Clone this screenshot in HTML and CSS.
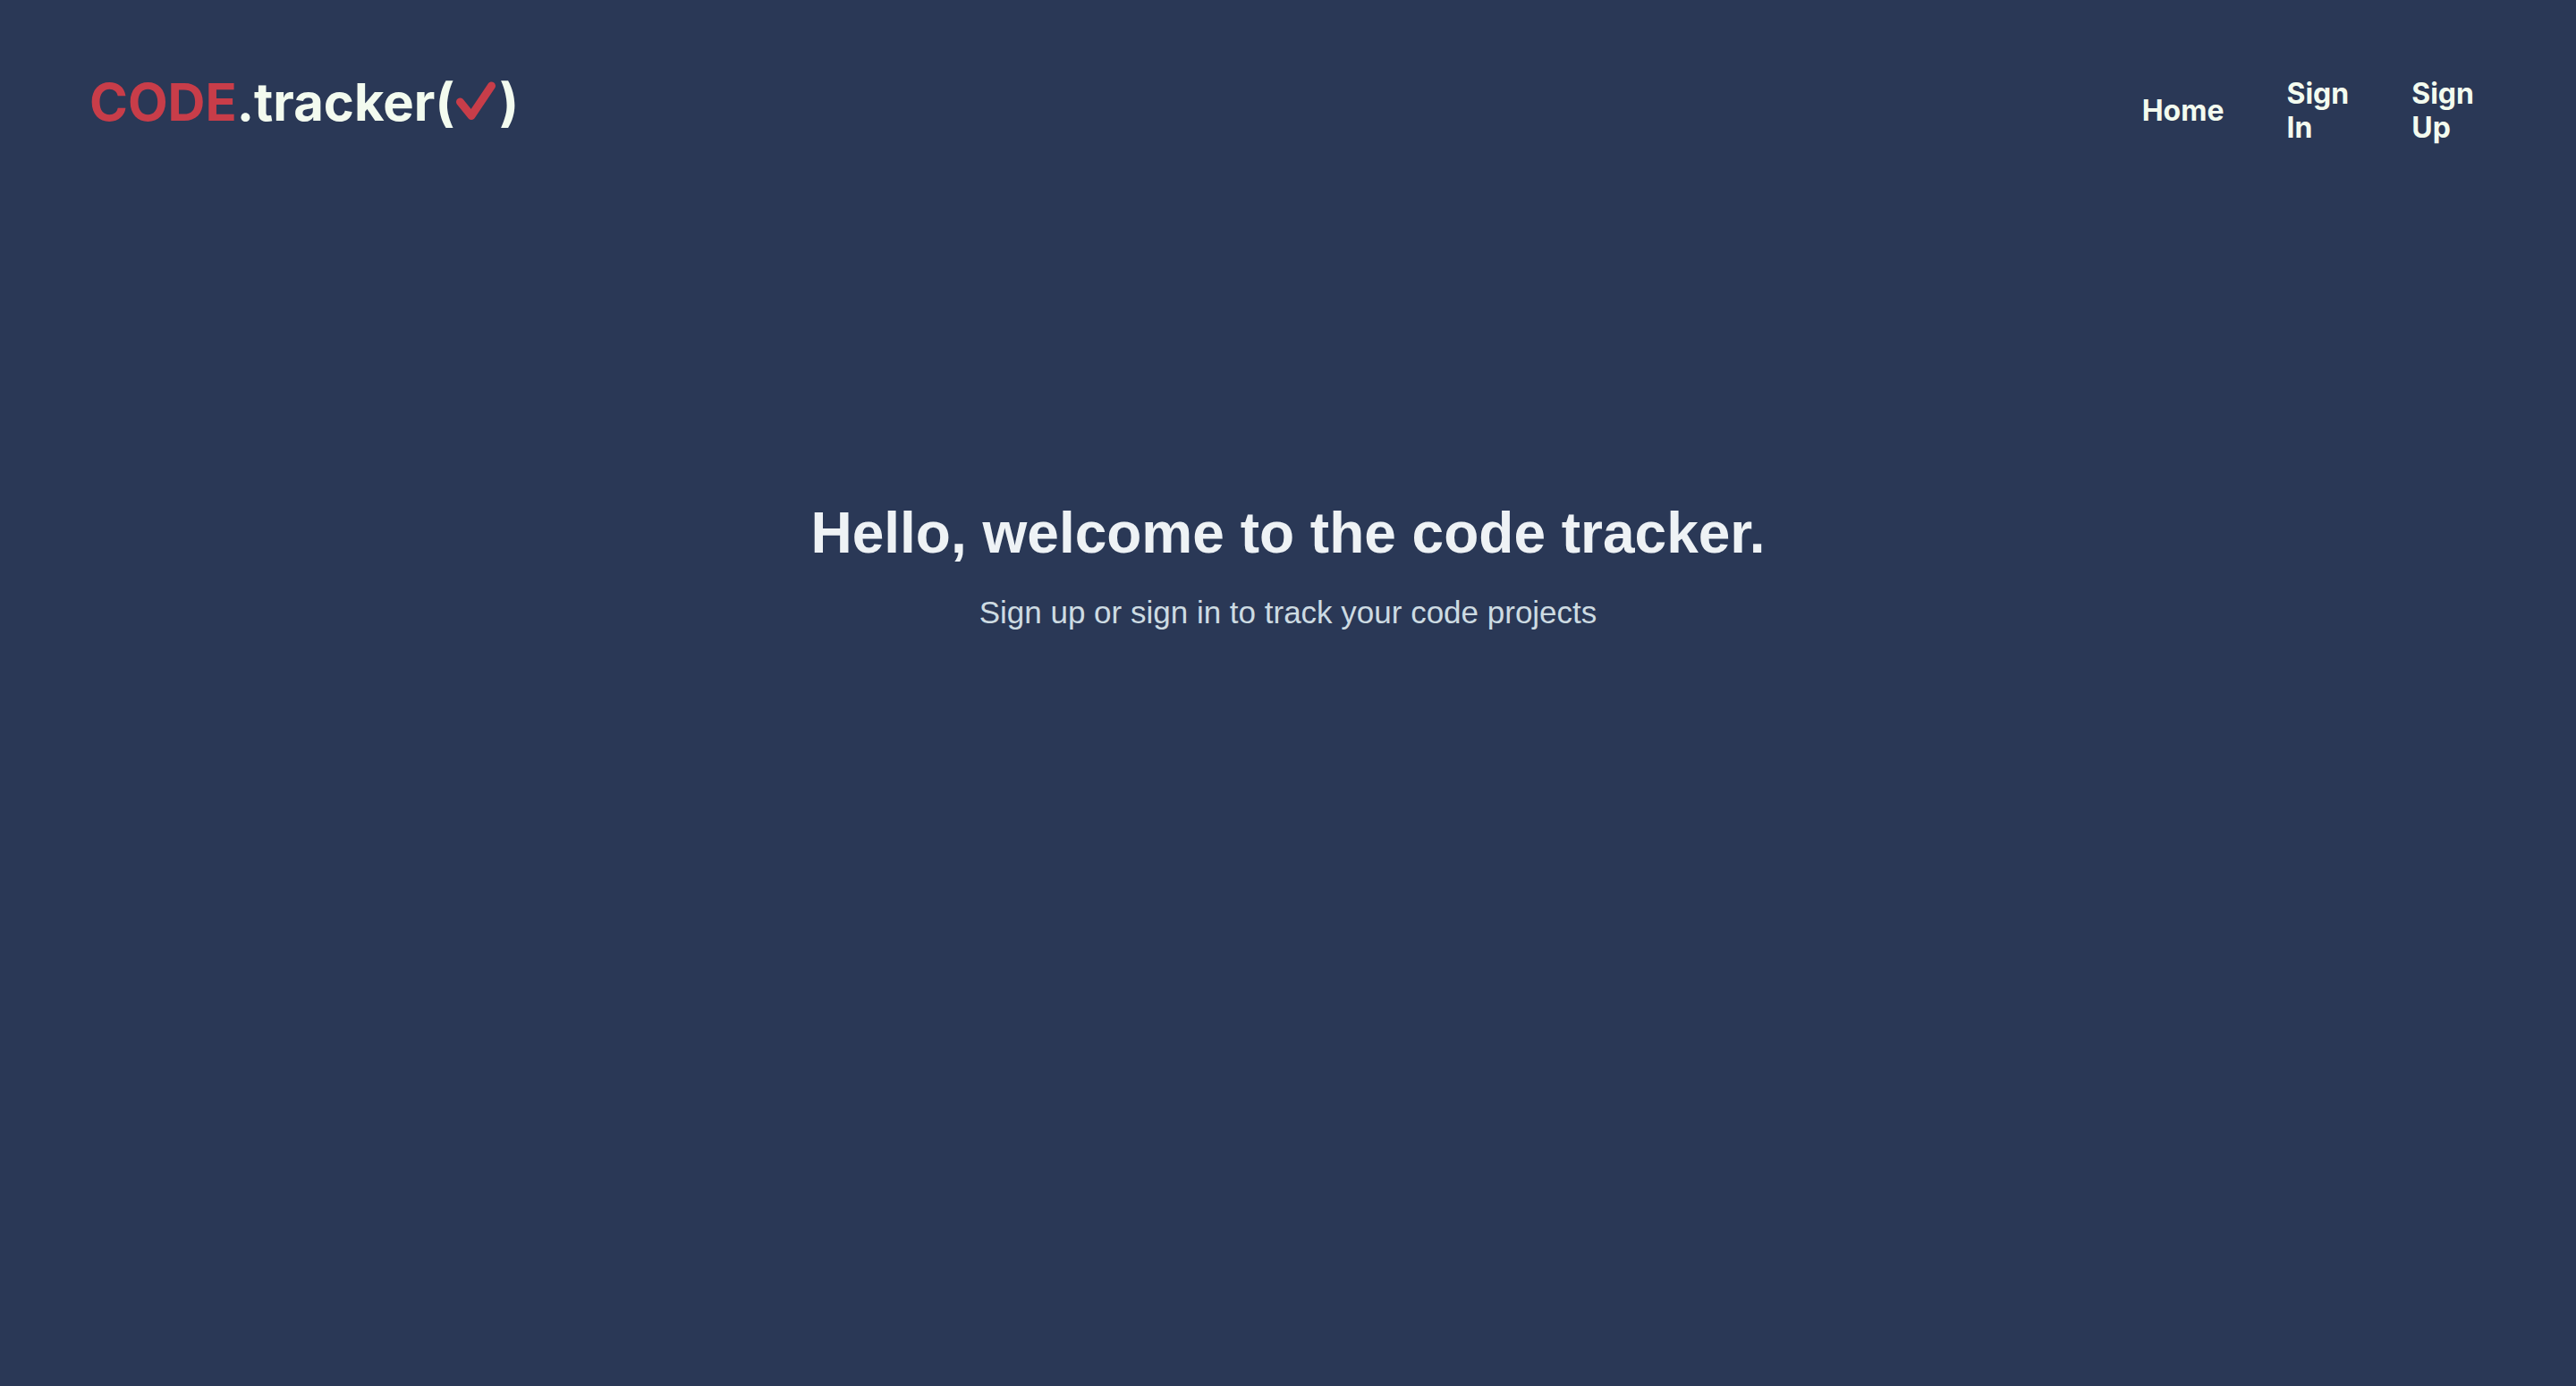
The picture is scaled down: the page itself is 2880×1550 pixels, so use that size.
FILE: index.html
```html
<!DOCTYPE html>
<html lang="en">
<head>
<meta charset="utf-8">
<title>CODE.tracker</title>
<link rel="stylesheet" href="styles.css">
</head>
<body>
<header class="header">
<a class="logo" href="#"><span class="logo-accent">CODE</span>.tracker(<svg class="logo-check" viewBox="0 0 44 44" aria-hidden="true"><path d="M4.5 23 L17 38.5 L39.5 5"/></svg>)</a>
<nav class="nav">
<a class="nav-link" href="#">Home</a>
<a class="nav-link" href="#">Sign<br>In</a>
<a class="nav-link" href="#">Sign<br>Up</a>
</nav>
</header>
<main class="hero">
<h1 class="hero-title">Hello, welcome to the code tracker.</h1>
<p class="hero-text">Sign up or sign in to track your code projects</p>
</main>
</body>
</html>
```
FILE: styles.css
```css
body {
  margin: 0;
  min-height: 100vh;
  background: #2a3856;
  font-family: "Liberation Sans", Arial, sans-serif;
}
.header {
  display: flex;
  justify-content: space-between;
  align-items: flex-start;
  padding: 78px 114px 0 100px;
}
.logo {
  color: #f3fbef;
  font: 700 58px/72px Inter, sans-serif;
  text-decoration: none;
}
.logo-accent { color: #c83d49; }
.logo-check {
  width: 44px;
  height: 44px;
  margin: 0 4px 0 2px;
  fill: none;
  stroke: #c83d49;
  stroke-width: 9;
  stroke-linecap: round;
  stroke-linejoin: round;
}
.nav {
  display: flex;
  align-items: center;
  gap: 70px;
  padding-top: 8px;
}
.nav-link {
  color: #f3fbef;
  font: 700 32px/38px Inter, sans-serif;
  text-decoration: none;
}
.hero {
  padding-top: 396px;
  text-align: center;
}
.hero-title {
  margin: 0;
  color: #eef2f5;
  font-size: 64px;
  line-height: 76px;
}
.hero-text {
  margin: 30px 0 0;
  color: #cddbe2;
  font-size: 35px;
  line-height: 42px;
}
```
